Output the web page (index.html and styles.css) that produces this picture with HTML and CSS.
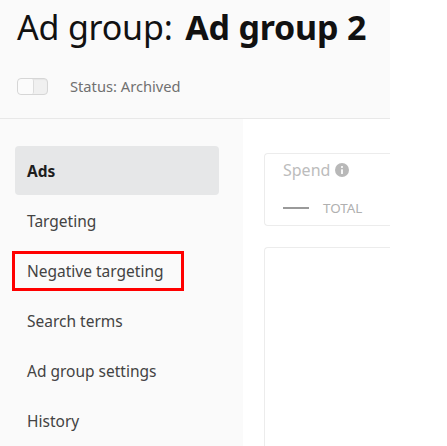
FILE: index.html
```html
<!DOCTYPE html>
<html>
<head>
<meta charset="utf-8">
<link rel="stylesheet" href="styles.css">
</head>
<body>
<div class="page">
  <header class="header">
    <h1 class="title"><span class="title-label">Ad group:</span> <span class="title-name">Ad group 2</span></h1>
    <div class="status-row">
      <span class="toggle"><span class="knob"></span></span>
      <span class="status">Status: Archived</span>
    </div>
  </header>
  <div class="body">
    <nav class="sidebar">
      <div class="nav-item active">Ads</div>
      <div class="nav-item">Targeting</div>
      <div class="nav-item highlight">Negative targeting</div>
      <div class="nav-item">Search terms</div>
      <div class="nav-item">Ad group settings</div>
      <div class="nav-item">History</div>
    </nav>
    <main class="content">
      <div class="card metric">
        <div class="metric-title">Spend
          <svg class="info" viewBox="0 0 16 16" width="14" height="14"><circle cx="8" cy="8" r="8" fill="#b8b8b8"/><rect x="7" y="7" width="2" height="5.5" rx="0.6" fill="#fff"/><circle cx="8" cy="4.6" r="1.2" fill="#fff"/></svg>
        </div>
        <div class="legend"><span class="legend-line"></span><span class="legend-text">TOTAL</span></div>
      </div>
      <div class="card table"></div>
    </main>
  </div>
</div>
</body>
</html>
```
FILE: styles.css
```css
html, body {
  margin: 0;
  padding: 0;
  background: #ffffff;
}
body {
  font-family: "Noto Sans", "Open Sans", sans-serif;
  height: 446px;
  overflow: hidden;
}
.page {
  width: 390px;
  height: 446px;
  display: flex;
  flex-direction: column;
}
.header {
  background: #fafafa;
  height: 119px;
  border-bottom: 1px solid #e8e8e8;
  padding: 0 0 0 17px;
  box-sizing: content-box;
}
.title {
  margin: 0;
  padding-top: 4px;
  font-size: 34px;
  line-height: 46px;
  color: #111;
  font-weight: 400;
  white-space: nowrap;
  letter-spacing: -0.2px;
}
.title-name {
  font-weight: 700;
  margin-left: 4px;
}
.status-row {
  display: flex;
  align-items: center;
  margin-top: 27px;
  height: 18px;
}
.toggle {
  width: 29px;
  height: 15px;
  border: 1px solid #d6d6d6;
  border-radius: 4px;
  background: #f0f0f0;
  display: flex;
  box-shadow: inset 0 1px 1px rgba(0,0,0,0.04);
}
.knob {
  width: 15px;
  height: 15px;
  background: #fbfbfb;
  border-right: 1px solid #dcdcdc;
  border-radius: 4px 2px 2px 4px;
}
.status {
  margin-left: 22px;
  font-size: 14.7px;
  color: #707070;
}
.body {
  flex: 1;
  display: flex;
}
.sidebar {
  width: 243px;
  background: #fafafa;
  padding: 27px 0 0 15px;
  box-sizing: border-box;
  display: flex;
  flex-direction: column;
}
.nav-item {
  width: 204px;
  height: 50px;
  box-sizing: border-box;
  padding-left: 12px;
  display: flex;
  align-items: center;
  font-size: 15.5px;
  color: #434343;
}
.nav-item.active {
  background: #e6e7e8;
  border-radius: 4px;
  font-weight: 700;
  color: #1e1e1e;
  height: 49px;
  margin-bottom: 1px;
}
.nav-item.highlight {
  width: 172px;
  height: 40px;
  margin: 5px 0 5px -3px;
  padding-left: 12px;
  border: 3px solid #ff0000;
}
.content {
  flex: 1;
  background: #fff;
  padding: 34px 0 0 21px;
  display: flex;
  flex-direction: column;
  gap: 21px;
}
.card {
  border: 1px solid #ececec;
  border-right: none;
  border-radius: 4px 0 0 4px;
}
.metric {
  height: 73px;
  padding: 6px 0 0 18px;
  box-sizing: border-box;
}
.metric-title {
  display: flex;
  align-items: center;
  gap: 5px;
  font-size: 16px;
  color: #bcbcbc;
  line-height: 20px;
}
.info {
  display: block;
}
.legend {
  display: flex;
  align-items: center;
  margin-top: 19px;
}
.legend-line {
  width: 26px;
  height: 2px;
  background: #9a9a9a;
}
.legend-text {
  margin-left: 14px;
  font-size: 13.4px;
  color: #b0b0b0;
}
.table {
  flex: 1;
  border-bottom: none;
  border-radius: 4px 0 0 0;
}
```
